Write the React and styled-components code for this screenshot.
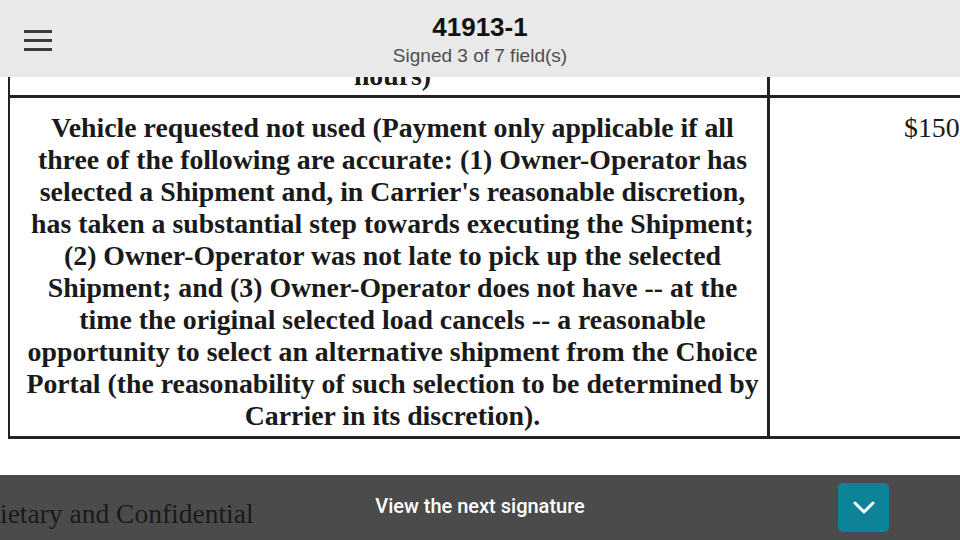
import React from 'react';
import styled, { createGlobalStyle } from 'styled-components';

const GlobalStyle = createGlobalStyle`
  html, body {
    margin: 0;
    padding: 0;
    background: #ffffff;
  }
  #root {
    width: 960px;
    height: 540px;
  }
`;

const Screen = styled.div`
  width: 960px;
  height: 540px;
  display: flex;
  flex-direction: column;
  overflow: hidden;
  background: #ffffff;
`;

const Header = styled.header`
  flex: 0 0 77px;
  position: relative;
  display: flex;
  flex-direction: column;
  align-items: center;
  justify-content: center;
  background: #e9e9e9;
  font-family: 'Liberation Sans', Arial, sans-serif;
`;

const MenuButton = styled.button`
  position: absolute;
  left: 24px;
  top: 30px;
  width: 28px;
  height: 21px;
  padding: 0;
  border: 0;
  background: transparent;
  display: flex;
  flex-direction: column;
  justify-content: space-between;

  & span {
    display: block;
    height: 3px;
    background: #3a3a3a;
  }
`;

const Title = styled.h1`
  margin: 0;
  font-size: 26px;
  font-weight: 700;
  color: #111111;
  line-height: 30px;
  margin-top: 2px;
`;

const Subtitle = styled.div`
  margin-top: 3px;
  font-size: 19px;
  color: #4e4e4e;
  line-height: 22px;
`;

const DocArea = styled.main`
  flex: 1;
  overflow: hidden;
  background: #ffffff;
  font-family: 'Liberation Serif', 'Times New Roman', serif;
  color: #1a1a1a;
`;

const Table = styled.div`
  margin-top: -14px;
  margin-left: 8px;
  width: 1100px;
  display: grid;
  grid-template-columns: 760px 1fr;
  border-left: 2px solid #222;
  border-bottom: 3px solid #222;
`;

const Cell = styled.div`
  border-right: 3px solid #222;
  border-top: ${(p) => (p.$top ? '3px solid #222' : '0')};
  padding: ${(p) => p.$pad || '0'};
  text-align: ${(p) => p.$align || 'center'};
  font-weight: ${(p) => (p.$bold ? 700 : 400)};
  font-size: 27.8px;
  line-height: 32px;
  overflow: hidden;
  height: ${(p) => p.$height || 'auto'};
`;

const Line = styled.span`
  display: block;
  white-space: nowrap;
`;

const BottomBar = styled.footer`
  flex: 0 0 65px;
  display: grid;
  grid-template-columns: 1fr auto 1fr;
  align-items: center;
  background: #4b4b4b;
`;

const Confidential = styled.div`
  font-family: 'Liberation Serif', 'Times New Roman', serif;
  font-size: 27.5px;
  color: #1a1a1a;
  white-space: nowrap;
  margin-top: 12px;
`;

const NextLabel = styled.div`
  font-family: Roboto, 'Liberation Sans', sans-serif;
  font-weight: 500;
  font-size: 20px;
  color: #ffffff;
  margin-top: -4px;
`;

const NextButton = styled.button`
  justify-self: end;
  margin-right: 71px;
  width: 51px;
  height: 49px;
  border: 0;
  border-radius: 5px;
  background: #0c8398;
  display: flex;
  align-items: center;
  justify-content: center;
  padding: 0;
`;

const lines = [
  'Vehicle requested not used (Payment only applicable if all',
  'three of the following are accurate: (1) Owner-Operator has',
  "selected a Shipment and, in Carrier's reasonable discretion,",
  'has taken a substantial step towards executing the Shipment;',
  '(2) Owner-Operator was not late to pick up the selected',
  'Shipment; and (3) Owner-Operator does not have -- at the',
  'time the original selected load cancels -- a reasonable',
  'opportunity to select an alternative shipment from the Choice',
  'Portal (the reasonability of such selection to be determined by',
  'Carrier in its discretion).',
];

export default function App() {
  return (
    <Screen>
      <GlobalStyle />
      <Header>
        <MenuButton aria-label="Menu">
          <span />
          <span />
          <span />
        </MenuButton>
        <Title>41913-1</Title>
        <Subtitle>Signed 3 of 7 field(s)</Subtitle>
      </Header>
      <DocArea>
        <Table>
          <Cell $bold $height="32px" $pad="0 0 0 8px">
            <Line style={{ marginTop: '-3px' }}>hours)</Line>
          </Cell>
          <Cell $height="32px" />
          <Cell $top $bold $pad="14px 0 4px 8px">
            {lines.map((l) => (
              <Line key={l}>{l}</Line>
            ))}
          </Cell>
          <Cell $top $align="left" $pad="14px 0 0 134px">
            $150
          </Cell>
        </Table>
      </DocArea>
      <BottomBar>
        <Confidential>ietary and Confidential</Confidential>
        <NextLabel>View the next signature</NextLabel>
        <NextButton aria-label="Next signature">
          <svg width="22" height="14" viewBox="0 0 22 14" fill="none">
            <path d="M2 2l9 9 9-9" stroke="#fff" strokeWidth="3" strokeLinecap="round" strokeLinejoin="round" />
          </svg>
        </NextButton>
      </BottomBar>
    </Screen>
  );
}
